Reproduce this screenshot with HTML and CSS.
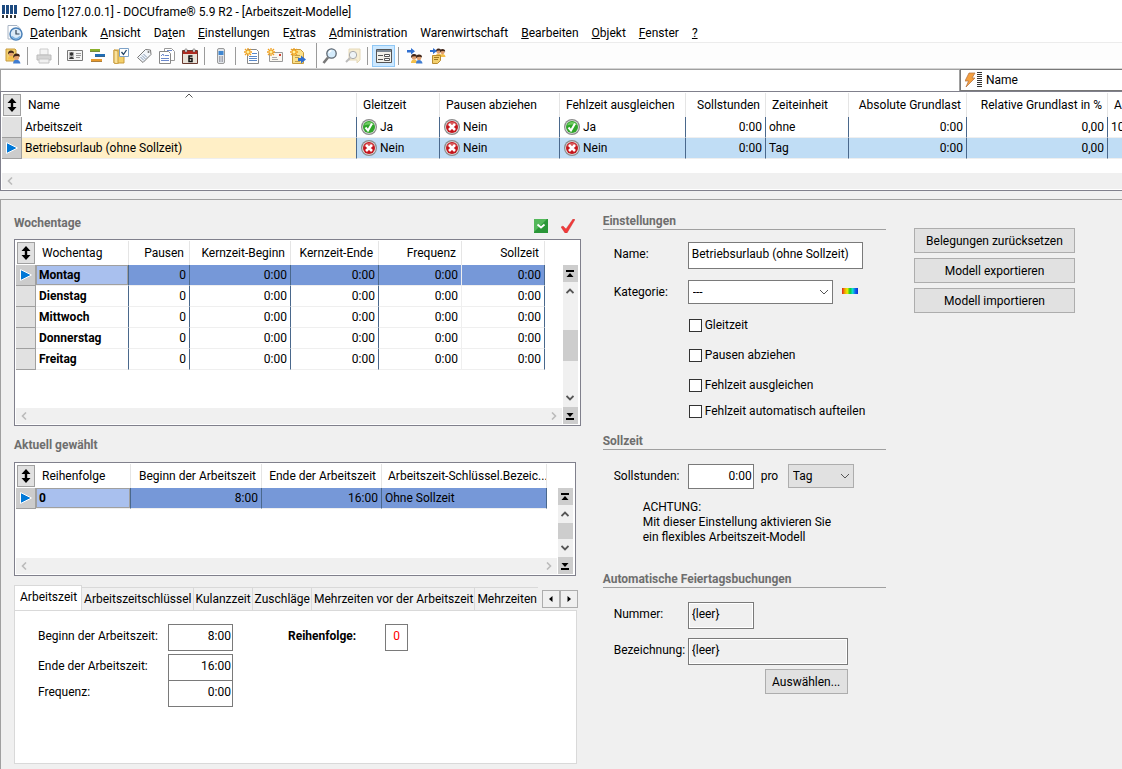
FILE: index.html
```html
<!DOCTYPE html>
<html lang="de">
<head>
  <meta charset="UTF-8">
  <title>Demo [127.0.0.1] - DOCUframe® 5.9 R2 - [Arbeitszeit-Modelle]</title>
  <link rel="stylesheet" href="styles.css">
</head>
<body>
  <!-- shared icons -->
  <svg class="sprite" aria-hidden="true">
    <symbol id="i-yes" viewBox="0 0 16 16">
      <circle cx="8" cy="8" r="8" fill="#8c8c8c"/>
      <circle cx="8" cy="8" r="6.8" fill="#e4e4e4"/>
      <circle cx="8" cy="8" r="6" fill="#2fa52a"/>
      <path d="M3 6.5A5.5 5.5 0 0 1 13 6Q8 5 3 6.5z" fill="#6fcc62"/>
      <path d="M4.5 8.5l2.5 3 4-7" fill="none" stroke="#fff" stroke-width="2"/>
    </symbol>
    <symbol id="i-no" viewBox="0 0 16 16">
      <circle cx="8" cy="8" r="8" fill="#8c8c8c"/>
      <circle cx="8" cy="8" r="6.8" fill="#e4e4e4"/>
      <circle cx="8" cy="8" r="6" fill="#c4161c"/>
      <path d="M3 6.5A5.5 5.5 0 0 1 13 6Q8 5 3 6.5z" fill="#d95a5a"/>
      <path d="M5 5l6 6M11 5l-6 6" stroke="#fff" stroke-width="2.6"/>
    </symbol>
    <symbol id="i-sort" viewBox="0 0 10 14">
      <path d="M5 0l4.5 5H6.2v4h3.3L5 14 .5 9h3.3V5H.5z" fill="#000"/>
    </symbol>
    <symbol id="i-row" viewBox="0 0 12 12">
      <path d="M.5.5L11.5 6 .5 11.5z" fill="#0078d7" stroke="#fff"/>
    </symbol>
    <symbol id="i-left" viewBox="0 0 8 8"><path d="M6 .5L2.500 4 6 7.500" fill="none" stroke="currentColor" stroke-width="1.600"/></symbol>
    <symbol id="i-right" viewBox="0 0 8 8"><path d="M2 .5L5.500 4 2 7.500" fill="none" stroke="currentColor" stroke-width="1.600"/></symbol>
    <symbol id="i-up" viewBox="0 0 8 8"><path d="M.5 6L4 2.500 7.500 6" fill="none" stroke="currentColor" stroke-width="1.800"/></symbol>
    <symbol id="i-down" viewBox="0 0 8 8"><path d="M.5 2L4 5.500 7.500 2" fill="none" stroke="currentColor" stroke-width="1.800"/></symbol>
    <symbol id="i-first" viewBox="0 0 8 8"><path d="M0 0h8v2H0zM4 3l3.500 4h-7z" fill="#000"/></symbol>
    <symbol id="i-last" viewBox="0 0 8 8"><path d="M0 6h8v2H0zM4 5L.5 1h7z" fill="#000"/></symbol>
    <symbol id="i-star" viewBox="0 0 8 8"><path d="M4 0v8M0 4h8M1 1l6 6M7 1L1 7" stroke="#f0a020" stroke-width="1.300"/><circle cx="4" cy="4" r="1.500" fill="#fff3a0"/></symbol>
    <symbol id="i-man" viewBox="0 0 8 9"><path d="M1 9Q1 5.500 4 5.500T7.500 9z" fill="#f4c04a"/><circle cx="4" cy="3.500" r="2.300" fill="#e0a070"/><path d="M1 4Q.8 0 4 0t3 3L5 2.200 2.500 2.500z" fill="#40261a"/></symbol>
    <symbol id="i-man-blue" viewBox="0 0 8 9"><path d="M1 9Q1 5.500 4 5.500T7.500 9z" fill="#3f7cd0"/><circle cx="4" cy="3.500" r="2.300" fill="#e0a070"/><path d="M1 4Q.8 0 4 0t3 3L5 2.200 2.500 2.500z" fill="#40261a"/></symbol>
  </svg>

  <header class="app-head">
    <div class="titlebar">
      <svg class="ico" viewBox="0 0 16 16"><path d="M0 1h3v9H0zM4 1h3v9H4zM8 1h3v9H8zM12 1h3v9h-3z" fill="#1d4a80"/><path d="M0 11h2v3H0zM4 11h2v3H4zM8 11h2v3H8zM12 11h2v3h-2z" fill="#333"/></svg>
      <span>Demo [127.0.0.1] - DOCUframe® 5.9 R2 - [Arbeitszeit-Modelle]</span>
    </div>
    <nav class="menubar">
      <svg class="ico" viewBox="0 0 16 16"><path d="M1 .5h9l3 3V14H1z" fill="#fff" stroke="#a8b4c4"/><circle cx="9" cy="9" r="6" fill="#dcebf8" stroke="#4a80b8" stroke-width="1.500"/><path d="M9 5v4h3.500" fill="none" stroke="#345" stroke-width="1.200"/><path d="M5 11.500Q9 16 13 11.500" fill="none" stroke="#7ab0e0" stroke-width="1.500"/></svg>
      <a href="#"><u>D</u>atenbank</a>
      <a href="#"><u>A</u>nsicht</a>
      <a href="#">Da<u>t</u>en</a>
      <a href="#"><u>E</u>instellungen</a>
      <a href="#">E<u>x</u>tras</a>
      <a href="#"><u>A</u>dministration</a>
      <a href="#">Warenwirtschaft</a>
      <a href="#"><u>B</u>earbeiten</a>
      <a href="#"><u>O</u>bjekt</a>
      <a href="#"><u>F</u>enster</a>
      <a href="#"><u>?</u></a>
    </nav>
    <div class="toolbar">
      <button class="tool" aria-label="Benutzer"><svg class="ico" viewBox="0 0 16 16"><path d="M1 1h9l1 1v11H1z" fill="#f2cf6e" stroke="#c89b3c"/><use href="#i-man" x="2" y="2" width="8" height="10"/><use href="#i-man-blue" x="7" y="5" width="9" height="11"/></svg></button>
      <i class="sep"></i>
      <button class="tool" aria-label="Drucken"><svg class="ico" viewBox="0 0 16 16"><path d="M4 1h8v6H4z" fill="#f4f4f4" stroke="#ccc"/><path d="M1 7h14v5H1z" fill="#d4d4d4" stroke="#bbb"/><path d="M3 11h10v4H3z" fill="#f0f0f0" stroke="#c4c4c4"/></svg></button>
      <i class="sep"></i>
      <button class="tool" aria-label="Adresse"><svg class="ico" viewBox="0 0 16 16"><path d="M.5 2.500h15v10H.5z" fill="#f4f4f4" stroke="#777"/><path d="M2 4h5v7H2z" fill="#bbb"/><circle cx="4.500" cy="6" r="1.800" fill="#333"/><path d="M2 11q2.500-4.500 5 0z" fill="#333"/><path d="M9 5.500h5M9 7.500h5M9 9.500h4" stroke="#999"/></svg></button>
      <button class="tool" aria-label="Projekt"><svg class="ico" viewBox="0 0 16 16"><path d="M0 1h10v3H0z" fill="#8bb02c"/><path d="M5 6h10v3H5z" fill="#1f6db5"/><path d="M1 11h11v3H1z" fill="#e89a2c"/><path d="M0 3.500h10M5 8.500h10M1 13.500h11" stroke="#555" stroke-opacity=".4"/></svg></button>
      <button class="tool" aria-label="Aufgaben"><svg class="ico" viewBox="0 0 16 16"><path d="M1 2h10v13H1z" fill="#f3cf68" stroke="#c89b3c"/><path d="M1 2l4 1v13l-4-1z" fill="#f9e19a" stroke="#c89b3c"/><path d="M6.500.5h9v8h-9z" fill="#fff" stroke="#7da2c8"/><path d="M8.500 4l2 2.500 3-4.500" fill="none" stroke="#246" stroke-width="1.300"/></svg></button>
      <button class="tool" aria-label="Etikett"><svg class="ico" viewBox="0 0 16 16"><path d="M1.500 9.500l8-8 5 .5.500 4.500-8 8z" fill="#f3f6fa" stroke="#777"/><circle cx="12.500" cy="4" r="1" fill="#777"/><path d="M4.500 9l3.500 3.500M6 7.500l3.500 3.500M7.500 6l3.500 3.500" stroke="#8298b4"/></svg></button>
      <button class="tool" aria-label="Dokumente"><svg class="ico" viewBox="0 0 16 16"><path d="M5.500.5h7l3 3v9h-10z" fill="#fff" stroke="#9a9a9a"/><path d="M.5 3.500h9l2 2v10H.5z" fill="#fff" stroke="#888"/><path d="M2 8l2-2 1 2M6 7.500h4M2 10.500h8M2 12.500h8M8 2.500h5" fill="none" stroke="#6b88cc"/></svg></button>
      <button class="tool" aria-label="Kalender"><svg class="ico" viewBox="0 0 16 16"><path d="M.5 2.500h15v13H.5z" fill="#e8e2d8" stroke="#6b3a30"/><path d="M1 3h14v3H1z" fill="#b02a20"/><path d="M3 1h2v3H3zM11 1h2v3h-2z" fill="#eee" stroke="#555" stroke-width=".5"/><path d="M10.500 8H7v5.500h3V10.500H7" fill="none" stroke="#111" stroke-width="1.500"/></svg></button>
      <i class="sep"></i>
      <button class="tool" aria-label="Telefon"><svg class="ico" viewBox="0 0 16 16"><rect x="4.500" y=".5" width="7" height="15" rx="1.500" fill="#e2e6ea" stroke="#999"/><path d="M5.500 3h5v4h-5z" fill="#3f86d0"/><path d="M6 9h1M7.500 9h1M9 9h1M6 11h1M7.500 11h1M9 11h1M6 13h1M7.500 13h1M9 13h1" stroke="#667" stroke-width="1.200"/></svg></button>
      <i class="sep"></i>
      <button class="tool" aria-label="Neues Dokument"><svg class="ico" viewBox="0 0 16 16"><path d="M3.500 1.500h9l2 2v12h-11z" fill="#fff" stroke="#888"/><path d="M8 5.500h5M5 8.500h8M5 10.500h8M5 12.500h8" stroke="#5a88c8"/><use href="#i-star" width="8" height="8"/></svg></button>
      <button class="tool" aria-label="Neue Nachricht"><svg class="ico" viewBox="0 0 16 16"><path d="M2.500 4.500h13v9h-13z" fill="#faf7f0" stroke="#999"/><path d="M12 6h2v2h-2z" fill="#d04030"/><path d="M5 9.500h5M5 11.500h6" stroke="#aaa"/><use href="#i-star" width="8" height="8"/></svg></button>
      <button class="tool" aria-label="Neuer Export"><svg class="ico" viewBox="0 0 16 16"><path d="M2.500 1.500h8l3 3v11h-11z" fill="#fbe08a" stroke="#c89b3c"/><path d="M5 7.500h5M5 9.500h4M5 13.500h5" stroke="#c0a050"/><path d="M8 10h3V7.500l5 4-5 4V13H8z" fill="#2f6fd0"/><use href="#i-star" width="8" height="8"/></svg></button>
      <i class="sep tall"></i>
      <button class="tool" aria-label="Suchen"><svg class="ico" viewBox="0 0 16 16"><path d="M6 9.500L1.500 15" stroke="#777" stroke-width="2.600"/><circle cx="9.500" cy="5.500" r="4.700" fill="#d4ebfb" stroke="#5c6670" stroke-width="1.300"/><path d="M7 5q.5-2 2.500-2.500" fill="none" stroke="#fff" stroke-width="1.300"/></svg></button>
      <button class="tool" aria-label="Erweiterte Suche"><svg class="ico" viewBox="0 0 16 16"><path d="M4 1h11v11l-3 3V12H4z" fill="#f8eed2" stroke="#e4d8b8"/><path d="M5 10l-4 4" stroke="#bbb" stroke-width="2"/><circle cx="8" cy="7" r="3.700" fill="#eef3f6" stroke="#aaa"/></svg></button>
      <i class="sep"></i>
      <button class="tool on" aria-label="Formular"><svg class="ico" viewBox="0 0 16 16"><path d="M.5 1.500h15v13H.5z" fill="#f3f1ea" stroke="#555"/><path d="M1 2h14v2H1z" fill="#7c8894"/><path d="M2 7.500h5M2 11.500h5" stroke="#555"/><path d="M8.500 6.500h5v2h-5zM8.500 10.500h5v2h-5z" fill="#fff" stroke="#555"/></svg></button>
      <i class="sep"></i>
      <button class="tool" aria-label="Benutzer zuweisen"><svg class="ico" viewBox="0 0 16 16"><path d="M0 2h4V0l4 3.200-4 3.200V4.500H0z" fill="#2f6fd0"/><use href="#i-man" x="3" y="5" width="8" height="11"/><use href="#i-man-blue" x="8" y="6" width="8" height="10"/></svg></button>
      <button class="tool" aria-label="Gruppe zuweisen"><svg class="ico" viewBox="0 0 16 16"><use href="#i-man" x="5" y="0" width="7" height="9"/><use href="#i-man" x="9" y="0" width="7" height="10"/><path d="M0 2h3V0l4 3-4 3V4H0z" fill="#2f6fd0"/><path d="M2.500 7.500h8v5l-3 3h-5z" fill="#f2cf6e" stroke="#b88b30"/><path d="M4 9.500h5M4 11.500h4" stroke="#a07820"/></svg></button>
    </div>
  </header>

  <div class="filterbar">
    <div class="filter-text"></div>
    <div class="filter-field">
      <svg class="bolt" viewBox="0 0 18 16"><path d="M4 1h6L7 6h3L1 15l2.500-6H0z" fill="#f4a040" stroke="#b07040" stroke-width=".7"/><path d="M12 .5h5M12 2.500h5M12 4.500h5M12 6.500h5M12 8.500h5M12 10.500h5M12 12.500h5M12 14.500h5" stroke="#333"/></svg>
      <span>Name</span>
    </div>
  </div>

  <section class="models">
    <table class="grid models-grid">
      <colgroup><col class="w-sel"><col class="m-name"><col class="m-glz"><col class="m-pau"><col class="m-feh"><col class="m-sol"><col class="m-zei"><col class="m-abs"><col class="m-rel"><col class="m-abw"></colgroup>
      <thead>
        <tr><th class="sel"><span><svg><use href="#i-sort"/></svg></span></th><th class="sorted">Name<svg class="sort-mark" viewBox="0 0 8 5"><path d="M.5 4.500L4 1l3.500 3.500" fill="none" stroke="#555"/></svg></th><th>Gleitzeit</th><th>Pausen abziehen</th><th>Fehlzeit ausgleichen</th><th class="num">Sollstunden</th><th>Zeiteinheit</th><th class="num">Absolute Grundlast</th><th class="num">Relative Grundlast in %</th><th>A</th></tr>
      </thead>
      <tbody>
        <tr><td class="sel"></td><td>Arbeitszeit</td><td><svg class="flag"><use href="#i-yes"/></svg>Ja</td><td><svg class="flag"><use href="#i-no"/></svg>Nein</td><td><svg class="flag"><use href="#i-yes"/></svg>Ja</td><td class="num">0:00</td><td>ohne</td><td class="num">0:00</td><td class="num">0,00</td><td>10</td></tr>
        <tr class="current"><td class="sel"><svg><use href="#i-row"/></svg></td><td class="focus">Betriebsurlaub (ohne Sollzeit)</td><td><svg class="flag"><use href="#i-no"/></svg>Nein</td><td><svg class="flag"><use href="#i-no"/></svg>Nein</td><td><svg class="flag"><use href="#i-no"/></svg>Nein</td><td class="num">0:00</td><td>Tag</td><td class="num">0:00</td><td class="num">0,00</td><td></td></tr>
      </tbody>
    </table>
    <div class="hbar"><svg><use href="#i-left"/></svg></div>
  </section>

  <main class="form">
    <div class="col-left">
      <div class="head-row">
        <h2>Wochentage</h2>
        <button class="mini" aria-label="Aufklappen"><svg viewBox="0 0 14 14"><path d="M0 0h14v14H0z" fill="#2a9638"/><path d="M0 0h13L0 13z" fill="#53b85a"/><path d="M3.500 5.500l3.500 3 3.500-3" fill="none" stroke="#fff" stroke-width="1.800"/></svg></button>
        <button class="mini" aria-label="Übernehmen"><svg viewBox="0 0 14 14"><path d="M0 8l2-1 3 3L12 0l2 .5L6 14H4z" fill="#f23a3a" stroke="#c03030" stroke-width=".4"/></svg></button>
      </div>
      <div class="gridbox days-box">
        <div class="pane">
          <table class="grid days-grid">
            <colgroup><col class="w-sel"><col class="d-tag"><col class="d-pau"><col class="d-beg"><col class="d-end"><col class="d-fre"><col class="d-sol"></colgroup>
            <thead>
              <tr><th class="sel"><span><svg><use href="#i-sort"/></svg></span></th><th>Wochentag</th><th class="num">Pausen</th><th class="num">Kernzeit-Beginn</th><th class="num">Kernzeit-Ende</th><th class="num">Frequenz</th><th class="num">Sollzeit</th></tr>
            </thead>
            <tbody>
              <tr class="current"><td class="sel"><svg><use href="#i-row"/></svg></td><td class="focus">Montag</td><td class="num">0</td><td class="num">0:00</td><td class="num">0:00</td><td class="num">0:00</td><td class="num">0:00</td></tr>
              <tr><td class="sel"></td><td>Dienstag</td><td class="num">0</td><td class="num">0:00</td><td class="num">0:00</td><td class="num">0:00</td><td class="num">0:00</td></tr>
              <tr><td class="sel"></td><td>Mittwoch</td><td class="num">0</td><td class="num">0:00</td><td class="num">0:00</td><td class="num">0:00</td><td class="num">0:00</td></tr>
              <tr><td class="sel"></td><td>Donnerstag</td><td class="num">0</td><td class="num">0:00</td><td class="num">0:00</td><td class="num">0:00</td><td class="num">0:00</td></tr>
              <tr><td class="sel"></td><td>Freitag</td><td class="num">0</td><td class="num">0:00</td><td class="num">0:00</td><td class="num">0:00</td><td class="num">0:00</td></tr>
            </tbody>
          </table>
          <div class="hbar"><svg><use href="#i-left"/></svg><svg><use href="#i-right"/></svg></div>
        </div>
        <div class="vbar">
          <button aria-label="Anfang"><svg><use href="#i-first"/></svg></button>
          <svg class="arrow"><use href="#i-up"/></svg>
          <div class="track days-track"><div class="thumb"></div></div>
          <svg class="arrow"><use href="#i-down"/></svg>
          <button aria-label="Ende"><svg><use href="#i-last"/></svg></button>
        </div>
      </div>

      <div class="narrow">
        <div class="head-row second"><h2>Aktuell gewählt</h2></div>
        <div class="gridbox times-box">
          <div class="pane">
            <table class="grid times-grid">
              <colgroup><col class="w-sel"><col class="t-rei"><col class="t-beg"><col class="t-end"><col class="t-bez"></colgroup>
              <thead>
                <tr><th class="sel"><span><svg><use href="#i-sort"/></svg></span></th><th>Reihenfolge</th><th class="num">Beginn der Arbeitszeit</th><th class="num">Ende der Arbeitszeit</th><th>Arbeitszeit-Schlüssel.Bezeic...</th></tr>
              </thead>
              <tbody>
                <tr class="current"><td class="sel"><svg><use href="#i-row"/></svg></td><td class="focus">0</td><td class="num">8:00</td><td class="num">16:00</td><td>Ohne Sollzeit</td></tr>
              </tbody>
            </table>
            <div class="hbar"><svg><use href="#i-left"/></svg><svg><use href="#i-right"/></svg></div>
          </div>
          <div class="vbar">
            <button aria-label="Anfang"><svg><use href="#i-first"/></svg></button>
            <svg class="arrow"><use href="#i-up"/></svg>
            <div class="track"><div class="thumb"></div></div>
            <svg class="arrow"><use href="#i-down"/></svg>
            <button aria-label="Ende"><svg><use href="#i-last"/></svg></button>
          </div>
        </div>

        <div class="tabs">
          <div class="tablist" role="tablist">
            <button role="tab" class="tab active">Arbeitszeit</button>
            <button role="tab" class="tab">Arbeitszeitschlüssel</button>
            <button role="tab" class="tab">Kulanzzeit</button>
            <button role="tab" class="tab">Zuschläge</button>
            <button role="tab" class="tab">Mehrzeiten vor der Arbeitszeit</button>
            <button role="tab" class="tab">Mehrzeiten</button>
          </div>
          <div class="tab-scroll">
            <button aria-label="Zurück"><svg viewBox="0 0 8 8"><path d="M5.500 1v6L2 4z"/></svg></button>
            <button aria-label="Weiter"><svg viewBox="0 0 8 8"><path d="M2.500 1v6L6 4z"/></svg></button>
          </div>
        </div>
        <div class="tabpanel">
          <div class="times">
            <label for="beginn">Beginn der Arbeitszeit:</label><input id="beginn" class="num" value="8:00">
            <label for="ende">Ende der Arbeitszeit:</label><input id="ende" class="num" value="16:00">
            <label for="frequenz">Frequenz:</label><input id="frequenz" class="num" value="0:00">
          </div>
          <label class="order-label" for="reihe">Reihenfolge:</label>
          <input id="reihe" class="order" value="0">
        </div>
      </div>
    </div>

    <div class="col-mid">
      <h2 class="ruled">Einstellungen</h2>
      <div class="fields settings">
        <label for="name">Name:</label>
        <div><input id="name" class="w-name" value="Betriebsurlaub (ohne Sollzeit)"></div>
        <label for="kat">Kategorie:</label>
        <div class="line">
          <span class="pick"><select id="kat" class="w-kat"><option>---</option></select><svg viewBox="0 0 10 6"><path d="M1 1l4 4 4-4" fill="none" stroke="#555"/></svg></span>
          <span class="rainbow"></span>
        </div>
      </div>
      <div class="checks">
        <label><input type="checkbox">Gleitzeit</label>
        <label><input type="checkbox">Pausen abziehen</label>
        <label><input type="checkbox">Fehlzeit ausgleichen</label>
        <label class="close"><input type="checkbox">Fehlzeit automatisch aufteilen</label>
      </div>

      <h2 class="ruled">Sollzeit</h2>
      <div class="fields target">
        <label for="soll">Sollstunden:</label>
        <div class="line">
          <input id="soll" class="num w-short" value="0:00">
          <label for="einheit">pro</label>
          <span class="pick"><select id="einheit" class="w-short gray"><option>Tag</option></select><svg viewBox="0 0 10 6"><path d="M1 1l4 4 4-4" fill="none" stroke="#555"/></svg></span>
        </div>
      </div>
      <p class="note">ACHTUNG:<br>Mit dieser Einstellung aktivieren Sie<br>ein flexibles Arbeitszeit-Modell</p>

      <h2 class="ruled">Automatische Feiertagsbuchungen</h2>
      <div class="fields holidays">
        <label for="nummer">Nummer:</label>
        <div><input id="nummer" class="w-short locked" value="{leer}" readonly></div>
        <label for="bez">Bezeichnung:</label>
        <div><input id="bez" class="w-bez locked" value="{leer}" readonly></div>
      </div>
      <button class="btn choose">Auswählen...</button>
    </div>

    <div class="col-right">
      <button class="btn">Belegungen zurücksetzen</button>
      <button class="btn">Modell exportieren</button>
      <button class="btn">Modell importieren</button>
    </div>
  </main>
</body>
</html>
```

FILE: styles.css
```css
* {
  box-sizing: border-box;
}

body {
  margin: 0;
  min-height: 100vh;
  display: flex;
  flex-direction: column;
  background: #f0f0f0;
  color: #000;
  font-family: Roboto, "Open Sans", sans-serif;
  font-size: 12px;
  line-height: 16px;
  white-space: nowrap;
  overflow-x: hidden;
}

button, input, select {
  font: inherit;
  color: inherit;
  margin: 0;
  border-radius: 0;
}

button {
  padding: 0;
  border: 0;
  background: none;
}

svg {
  display: block;
}

.sprite {
  position: absolute;
  width: 0;
  height: 0;
}

.ico {
  width: 16px;
  height: 16px;
  flex: none;
}

/* title, menu, toolbar */
.app-head {
  background: #fff;
  border-bottom: 1px solid #d4d4d4;
}

.titlebar {
  display: flex;
  align-items: center;
  gap: 5px;
  height: 23px;
  padding-left: 2px;
}

.menubar {
  display: flex;
  align-items: center;
  gap: 13px;
  height: 19px;
  padding-left: 7px;
}

.menubar .ico {
  margin-right: -6px;
}

.menubar a {
  color: #000;
  text-decoration: none;
}

.toolbar {
  display: flex;
  align-items: center;
  height: 26px;
  padding-left: 1px;
  border-top: 1px solid #ececec;
  background: #fdfdfd;
}

.tool {
  width: 23px;
  height: 22px;
  display: flex;
  align-items: center;
  justify-content: center;
}

.tool.on {
  background: #cce8ff;
  border: 1px solid #90c8f6;
}

.sep {
  width: 1px;
  height: 18px;
  margin: 0 4px 0 3px;
  background: #9a9a9a;
}

.sep.tall {
  height: 25px;
  margin: 0 1px 0 7px;
}

/* filter line */
.filterbar {
  display: flex;
  height: 22px;
}

.filter-text {
  flex: 1;
  background: #fff;
  border: 1px solid #a0a0a0;
  border-bottom: 0;
}

.filter-field {
  flex: 0 0 162px;
  display: flex;
  align-items: center;
  gap: 3px;
  padding-left: 4px;
  background: #fff;
  border: 1px solid #777;
  border-right: 0;
}

.bolt {
  width: 18px;
  height: 16px;
}

/* data grids */
.grid {
  table-layout: fixed;
  border-collapse: separate;
  border-spacing: 0;
}

.grid th, .grid td {
  padding: 0 3px;
  text-align: left;
  overflow: hidden;
}

.grid th {
  height: 24px;
  padding: 0 5px 0 6px;
  font-weight: normal;
  border-right: 1px solid #e5e5e5;
}

.grid td {
  height: 21px;
  border-right: 1px solid #4a688c;
  border-bottom: 1px solid #efefef;
}

.grid .num {
  text-align: right;
}

.grid th.sel {
  padding: 1px;
  border: 0;
}

.grid th.sel span {
  display: flex;
  align-items: center;
  justify-content: center;
  width: 18px;
  height: 22px;
  background: #e1e1e1;
  border: 1px solid #a0a0a0;
}

.grid th.sel svg {
  width: 10px;
  height: 14px;
}

.grid td.sel {
  padding: 0 0 0 4px;
  background: #e1e1e1;
  border-right: 1px solid #a0a0a0;
  border-bottom: 1px solid #a0a0a0;
}

.grid td.sel svg {
  width: 12px;
  height: 12px;
}

.grid .current td.sel {
  background: #ccc;
}

.w-sel { width: 20px; }

.models {
  border: 1px solid #80808c;
  border-right: 0;
  background: #fff;
  padding: 1px 0 1px 1px;
  height: 100px;
  display: flex;
  flex-direction: column;
  justify-content: space-between;
  overflow: hidden;
}

.models-grid { width: 1226px; }
.m-name { width: 335px; }
.m-glz { width: 83px; }
.m-pau { width: 120px; }
.m-feh { width: 126px; }
.m-sol { width: 80px; }
.m-zei { width: 83px; }
.m-abs { width: 118px; }
.m-rel { width: 141px; }
.m-abw { width: 120px; }

.models-grid .current td {
  background: #c0ddf5;
}

.models-grid .current .focus {
  background: #ffefc6;
}

.models-grid td .flag {
  display: inline-block;
  vertical-align: middle;
  width: 16px;
  height: 16px;
  margin: 0 3px 0 1px;
}

.sorted {
  position: relative;
}

.sort-mark {
  position: absolute;
  top: 0;
  left: 50%;
  width: 8px;
  height: 5px;
  margin-left: -4px;
}

.hbar {
  display: flex;
  align-items: center;
  justify-content: space-between;
  height: 16px;
  padding: 0 4px;
  background: #f0f0f0;
  color: #bbb;
}

.hbar svg {
  width: 8px;
  height: 8px;
}

/* form area */
.form {
  flex: 1;
  display: grid;
  grid-template-columns: minmax(0, 2fr) minmax(0, 1fr) 167px;
  column-gap: 22px;
  align-items: start;
  margin-top: 8px;
  padding: 14px 47px 5px 13px;
  border-top: 1px solid #a0a0a0;
  border-left: 1px solid #a0a0a0;
}

h2 {
  margin: 0;
  font-size: 12px;
  line-height: 16px;
  font-weight: bold;
  color: #6e6e6e;
}

.head-row {
  display: flex;
  align-items: center;
  height: 25px;
  padding: 0 6px 8px 0;
}

.head-row h2 {
  flex: 1;
}

.head-row.second {
  height: 36px;
  padding: 2px 0 0;
}

.mini {
  margin: 6px 0 0 13px;
}

.mini svg {
  width: 14px;
  height: 14px;
}

.narrow {
  margin-right: 5px;
}

.gridbox {
  display: flex;
  gap: 1px;
  padding: 1px 2px 1px 1px;
  border: 1px solid #80808c;
  background: #fff;
}

.days-box { height: 187px; }
.times-box { height: 114px; }

.pane {
  flex: 1;
  min-width: 0;
  overflow: hidden;
  display: flex;
  flex-direction: column;
  justify-content: space-between;
}

.days-grid { width: 529px; }
.d-tag { width: 93px; }
.d-pau { width: 61px; }
.d-beg { width: 101px; }
.d-end { width: 88px; }
.d-fre { width: 83px; }
.d-sol { width: 83px; }

.times-grid { width: 531px; }
.t-rei { width: 95px; }
.t-beg { width: 131px; }
.t-end { width: 120px; }
.t-bez { width: 165px; }

.days-grid td:nth-child(2), .times-grid td:nth-child(2) {
  font-weight: bold;
}

.days-grid td:nth-child(6) {
  border-right-color: #efefef;
}

.gridbox .current td {
  background: #7698d8;
}

.gridbox .current td.sel {
  background: #ccc;
}

.gridbox .current .focus {
  background: #a9c0ee;
  box-shadow: inset 0 0 0 1px #a0a0a0;
}

.vbar {
  display: flex;
  flex-direction: column;
  align-items: center;
  width: 15px;
  margin-top: 24px;
  background: #f0f0f0;
  color: #555;
}

.vbar button {
  display: flex;
  align-items: center;
  justify-content: center;
  width: 15px;
  height: 17px;
  background: #cdcdcd;
}

.vbar svg {
  width: 8px;
  height: 8px;
}

.vbar .arrow {
  margin: 5px 0;
}

.track {
  flex: 1;
  width: 100%;
}

.days-track {
  padding: 30px 0 28px;
}

.thumb {
  height: 100%;
  background: #cdcdcd;
}

.tabs {
  display: flex;
  margin-top: 9px;
  margin-right: -2px;
}

.tablist {
  flex: 1;
  min-width: 0;
  display: flex;
  align-items: flex-end;
  overflow: hidden;
}

.tab {
  flex: none;
  height: 23px;
  padding: 0 1px 0 2px;
  border-top: 1px solid #d9d9d9;
  border-right: 1px solid #d9d9d9;
}

.tab:last-child {
  border-right: 0;
}

.tab.active {
  height: 25px;
  padding: 0 4px 2px 5px;
  background: #fff;
  border-left: 1px solid #d9d9d9;
}

.tab-scroll {
  display: flex;
  align-self: flex-end;
  margin-bottom: 2px;
}

.tab-scroll button {
  display: flex;
  align-items: center;
  justify-content: center;
  width: 18px;
  height: 18px;
  border: 1px solid #adadad;
}

.tab-scroll svg {
  width: 8px;
  height: 8px;
}

.tabpanel {
  display: flex;
  align-items: flex-start;
  height: 154px;
  margin-right: -1px;
  padding: 13px 0 0 23px;
  background: #fff;
  border: 1px solid #d9d9d9;
}

input, select {
  height: 27px;
  padding: 0 3px 4px;
  background: #fff;
  border: 1px solid #7a7a7a;
}

input.num {
  padding-right: 1px;
  text-align: right;
}

.times {
  display: grid;
  grid-template-columns: 130px 65px;
  grid-template-rows: 30px 26px 27px;
}

.times label, .order-label {
  padding-top: 4px;
}

.times input {
  width: 65px;
}

.order-label {
  width: 97px;
  margin-left: 55px;
  font-weight: bold;
}

.order {
  width: 23px;
  color: #f00;
  text-align: center;
}

/* settings column */
.ruled {
  line-height: 15px;
  border-bottom: 1px solid #a0a0a0;
}

.fields {
  display: grid;
  grid-template-columns: 74px 1fr;
  padding-left: 11px;
}

.fields > label {
  padding-top: 4px;
}

.line {
  display: flex;
  align-items: flex-start;
}

.line label {
  width: 34px;
  padding: 4px 0 0 7px;
}

.settings {
  margin-top: 12px;
  row-gap: 11px;
}

.pick {
  position: relative;
}

.pick select {
  display: block;
  height: 24px;
  padding: 0 4px 1px;
  appearance: none;
}

.pick svg {
  position: absolute;
  right: 4px;
  top: 9px;
  width: 10px;
  height: 6px;
  pointer-events: none;
}

.pick .gray {
  background: #e1e1e1;
  border-color: #adadad;
}

.w-name { width: 175px; }
.w-kat { width: 145px; }
.w-short { width: 66px; }
.w-bez { width: 160px; }

.rainbow {
  width: 16px;
  height: 6px;
  margin: 8px 0 0 9px;
  background: linear-gradient(90deg, #e02020, #f0a000, #e8f000, #10c830, #10e0d0, #1060f0, #1030d0);
}

.checks {
  display: flex;
  flex-direction: column;
  gap: 14px;
  margin: 13px 0 15px 86px;
}

.checks label {
  display: flex;
  align-items: center;
  gap: 3px;
}

.checks .close {
  margin-top: -4px;
}

.checks input {
  appearance: none;
  width: 13px;
  height: 13px;
  padding: 0;
  border-color: #333;
}

.target {
  margin-top: 14px;
}

.target input {
  height: 25px;
  padding-bottom: 1px;
}

.note {
  margin: 11px 0 27px 40px;
  line-height: 15px;
}

.holidays {
  margin-top: 14px;
  row-gap: 9px;
}

.locked {
  background: #f0f0f0;
  box-shadow: inset 0 0 0 1px #fff;
}

.btn {
  height: 25px;
  background: #e1e1e1;
  border: 1px solid #adadad;
}

.choose {
  display: block;
  width: 83px;
  margin: 4px 0 0 162px;
}

.col-right {
  display: flex;
  flex-direction: column;
  gap: 5px;
  padding: 14px 0 0 6px;
}
```
